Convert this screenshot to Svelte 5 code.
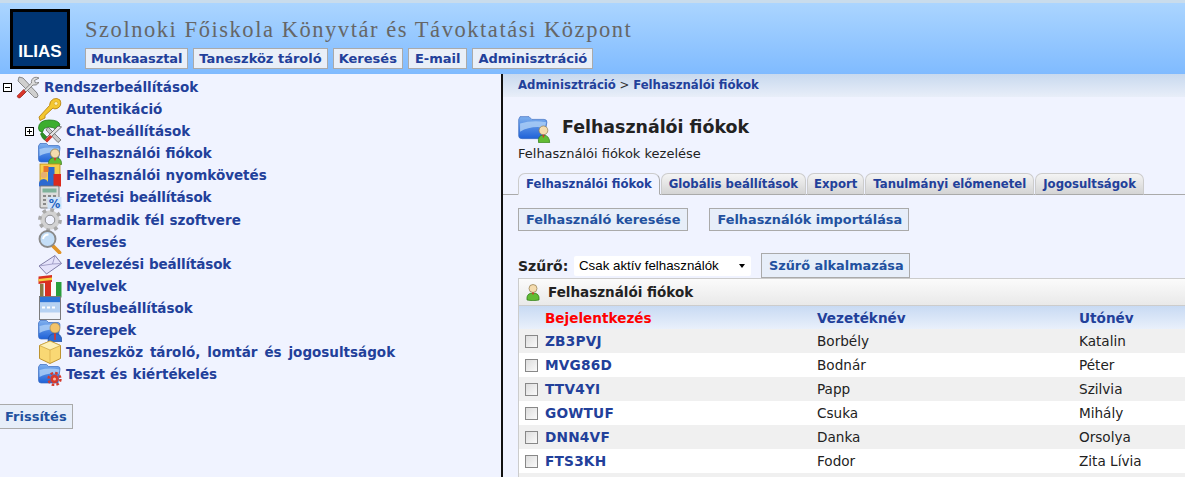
<script>
  const nav = ['Munkaasztal', 'Taneszköz tároló', 'Keresés', 'E-mail', 'Adminisztráció'];
  const tree = [
    { label: 'Autentikáció', icon: 'key' },
    { label: 'Chat-beállítások', icon: 'chat', plus: true },
    { label: 'Felhasználói fiókok', icon: 'users' },
    { label: 'Felhasználói nyomkövetés', icon: 'track' },
    { label: 'Fizetési beállítások', icon: 'calc', tight: true },
    { label: 'Harmadik fél szoftvere', icon: 'gear' },
    { label: 'Keresés', icon: 'search' },
    { label: 'Levelezési beállítások', icon: 'mail', tight: true },
    { label: 'Nyelvek', icon: 'flags' },
    { label: 'Stílusbeállítások', icon: 'style' },
    { label: 'Szerepek', icon: 'roles' },
    { label: 'Taneszköz tároló, lomtár és jogosultságok', icon: 'box', wide: true },
    { label: 'Teszt és kiértékelés', icon: 'test' }
  ];
  const tabs = ['Felhasználói fiókok', 'Globális beállítások', 'Export', 'Tanulmányi előmenetel', 'Jogosultságok'];
  const rows = [
    ['ZB3PVJ', 'Borbély', 'Katalin'],
    ['MVG86D', 'Bodnár', 'Péter'],
    ['TTV4YI', 'Papp', 'Szilvia'],
    ['GOWTUF', 'Csuka', 'Mihály'],
    ['DNN4VF', 'Danka', 'Orsolya'],
    ['FTS3KH', 'Fodor', 'Zita Lívia']
  ];
</script>

{#snippet folder()}
  <path d="M0.500 5 L2 2.500 H8.500 L10.500 4.500 H20 Q22 4.500 22 7 L20 21 H3 Q0.500 21 0.500 18 Z" fill="url(#fb)" stroke="#3a6cc0" stroke-width=".7"/>
  <path d="M1.500 8 Q11 5.500 21.500 7.500 L20.500 12 Q10 10 1.500 15 Z" fill="#a9cdf6" opacity=".85"/>
{/snippet}

{#snippet person(green)}
  <path d="M10.500 23.500 Q10 16.500 17 16.500 Q24 16.500 23.500 23.500 Q17 24.500 10.500 23.500 Z" fill={green ? '#62bc34' : '#2d6ad0'} stroke={green ? '#2f7a18' : '#1e4a9a'} stroke-width=".7"/>
  <circle cx="17" cy="12.500" r="4.500" fill="#f5dcae" stroke="#8f7a4c" stroke-width=".8"/>
  <path d="M16 17 h2 l-.4 2.500 h-1.200 Z" fill="#d9352a"/>
{/snippet}

{#snippet icon(name)}
  <svg class="ticon" viewBox="0 0 24 24" aria-hidden="true">
    {#if name === 'tools'}
      <path d="M3 2 L7 3 L21 18 Q23 21 21 22.500 Q18.500 23.500 16.500 20.500 L2 6 Z" fill="#cfcfcf" stroke="#707070" stroke-width=".8"/>
      <path d="M23 3 Q18 1 16 4.500 Q15 6.500 15.500 8 L4 19 L4 21 L6 21 L17 10 Q20.500 11 23 7.500 L19.500 8 L18.500 5.500 Z" fill="#dcdcdc" stroke="#707070" stroke-width=".8"/>
      <path d="M1 21 L7.500 14.500 L10 17 L4 23 Q1.500 23.500 1 21 Z" fill="#d8352a" stroke="#8a1c14" stroke-width=".5"/>
    {:else if name === 'key'}
      <path d="M22 3 Q24.500 9 19 11.500 Q16.500 12.500 15 11 L7 18.500 L7 21 L2 23.500 L1 20 L11.500 8.500 Q11.500 4 15.500 2 Q19 .5 22 3 Z" fill="#f4c72f" stroke="#b98410" stroke-width=".9"/>
      <circle cx="18" cy="6.500" r="1.800" fill="#fff3b8" stroke="#c9971f" stroke-width=".5"/>
    {:else if name === 'chat'}
      <path d="M.5 9 Q1 1 11 1 Q21 1 22 6 L18 10 Q12 6.500 6 9.500 L4.500 13 Q.5 13 .5 9 Z" fill="#3cae2f" stroke="#1f7a1a" stroke-width=".8"/>
      <path d="M4 13 L10 19 L8 22 Q4 20 2.500 15 Z" fill="#2f8f28" stroke="#1f7a1a" stroke-width=".6"/>
      <path d="M10 8 L23 21 L20 23.500 L8 11 Z" fill="#c9c9c9" stroke="#555" stroke-width=".7"/>
      <path d="M23.500 8 L12 19 L9 23 L7 21 L9 18 L20 7 Z" fill="#e2e2e2" stroke="#444" stroke-width=".7"/>
      <path d="M7 21 L12 16 L14.500 18 L9 23.500 Z" fill="#d8352a"/>
    {:else if name === 'users'}
      {@render folder()}{@render person(true)}
    {:else if name === 'track'}
      <rect x="2" y="1" width="20" height="20" fill="#f7cf4d" stroke="#b98a18" stroke-width=".8"/>
      <path d="M1 23.500 Q0 16 6 16 Q11 16.500 10.500 23.500 Z" fill="#2d6ad0"/>
      <circle cx="6" cy="12" r="3.200" fill="#e8b070"/>
      <rect x="10" y="4" width="6.500" height="19" fill="#2d6ad0"/>
      <rect x="15.500" y="11" width="7.500" height="12.500" fill="#db2b1e"/>
      <rect x="5.500" y="3" width="5" height="6" fill="#e9782a"/>
    {:else if name === 'calc'}
      <rect x="2" y="1" width="19" height="22" rx="1" fill="#dcdcdc" stroke="#707070" stroke-width=".9"/>
      <rect x="4.500" y="3.500" width="14" height="4" fill="#7fb29a"/>
      <path d="M5 10h3v2H5zM10 10h3v2h-3zM15 10h3v2h-3zM5 14h3v2H5zM5 18h3v2H5z" fill="#888"/>
      <rect x="9.500" y="12" width="14" height="12" fill="#cfe3f9"/>
      <text x="16.500" y="22.500" font-size="11.500" font-weight="700" fill="#1c60c0" text-anchor="middle" font-family="DejaVu Sans">%</text>
    {:else if name === 'gear'}
      <circle cx="12" cy="12" r="7.500" fill="none" stroke="#d2d2d2" stroke-width="4.500"/>
      <circle cx="12" cy="12" r="10.200" fill="none" stroke="#a8a8a8" stroke-width="3.400" stroke-dasharray="3.700 4.300"/>
      <circle cx="12" cy="12" r="4.800" fill="none" stroke="#808080" stroke-width=".9"/>
    {:else if name === 'search'}
      <path d="M14.500 15.500 L21.500 22.500" stroke="#e09428" stroke-width="3.800" stroke-linecap="round"/>
      <circle cx="9.500" cy="9" r="8" fill="#c4def7" stroke="#8a8a8a" stroke-width="1.900"/>
      <path d="M5 9 Q6 4.500 10.500 4.500" stroke="#fff" stroke-width="1.900" fill="none"/>
    {:else if name === 'mail'}
      <path d="M1 14 L17 3.500 L23.500 11.500 L8.500 22 Z" fill="#e4e2fa" stroke="#74719c" stroke-width=".9"/>
      <path d="M1 14 L14.500 12 L17 3.500 M14.500 12 L23.500 11.500" fill="none" stroke="#9491bd" stroke-width=".8"/>
    {:else if name === 'flags'}
      <path d="M.5 2.500 L14 1 V8 L.5 10 Z" fill="#d93022"/>
      <path d="M.5 5 L14 3.500 V6 L.5 7.500 Z" fill="#f4ce3e"/>
      <rect x="2" y="10" width="3.500" height="13" fill="#8a7a44"/>
      <path d="M7 8 H13 V23.500 H7 Z" fill="#d93022"/>
      <path d="M13 8 H18 V23.500 H13 Z" fill="#fafafa"/>
      <path d="M18 8 H23.500 V23.500 H18 Z" fill="#2a9e3c"/>
    {:else if name === 'style'}
      <rect x="1.500" y=".5" width="21" height="23" fill="#eef3fb" stroke="#707070" stroke-width=".9"/>
      <rect x="2" y="1" width="20" height="5.500" fill="#2e76d8"/>
      <rect x="2" y="6.500" width="20" height="10" fill="#b6d2f2"/>
      <path d="M4 10.500h3v2H4zM9 10.500h3v2H9zM14 10.500h3v2h-3z" fill="#fff"/>
    {:else if name === 'roles'}
      {@render folder()}
      <path d="M10 23.500 Q10 15.500 17 15.500 Q24 15.500 24 23.500 Z" fill="#2d6ad0" stroke="#1e4a9a" stroke-width=".7"/>
      <circle cx="17" cy="10" r="5" fill="#f2c36a" stroke="#a58a55" stroke-width=".7"/>
      <path d="M16 15.500 h2 l-.3 6.500 h-1.400 Z" fill="#d9352a"/>
    {:else if name === 'box'}
      <path d="M12 1 L22.500 5.500 V18.500 L12 23.500 L1.500 18.500 V5.500 Z" fill="#f9d874" stroke="#b88a20" stroke-width=".9"/>
      <path d="M1.500 5.500 L12 10 L22.500 5.500 L12 1 Z" fill="#fdf0b8" stroke="#c99f3a" stroke-width=".7"/>
      <path d="M12 10 V23.500" stroke="#d5aa45" stroke-width=".7"/>
    {:else if name === 'test'}
      {@render folder()}
      <circle cx="16.500" cy="17" r="4.200" fill="#d63a2c"/>
      <circle cx="16.500" cy="17" r="6" fill="none" stroke="#d63a2c" stroke-width="2.400" stroke-dasharray="2.600 2.100"/>
      <circle cx="16.500" cy="17" r="1.500" fill="#f5b8a8"/>
    {/if}
  </svg>
{/snippet}

<div class="page">
  <svg class="defs" width="0" height="0" aria-hidden="true">
    <defs>
      <linearGradient id="fb" x1="0" y1="0" x2="0" y2="1">
        <stop offset="0" stop-color="#7fb0ee"/>
        <stop offset="1" stop-color="#1f62d8"/>
      </linearGradient>
    </defs>
  </svg>
  <header class="top">
    <div class="logo"><span>ILIAS</span></div>
    <div class="brand">
      <div class="title">Szolnoki Főiskola Könyvtár és Távoktatási Központ</div>
      <nav class="nav">
        {#each nav as n}<a class="navbtn">{n}</a>{/each}
      </nav>
    </div>
  </header>

  <div class="main">
    <aside class="left">
      <div class="row root">
        <span class="toggle minus"></span>
        {@render icon('tools')}
        <a>Rendszerbeállítások</a>
      </div>
      {#each tree as t}
        <div class="row child" class:tight={t.tight} class:wide={t.wide}>
          {#if t.plus}<span class="toggle plus"></span>{/if}
          {@render icon(t.icon)}
          <a>{t.label}</a>
        </div>
      {/each}
      <button class="btn refresh">Frissítés</button>
    </aside>

    <section class="right">
      <div class="crumb"><a>Adminisztráció</a> <span class="gt">&gt;</span> <a>Felhasználói fiókok</a></div>

      <div class="head">
        <svg class="hicon" viewBox="0 0 24 20" aria-hidden="true">
          <path d="M.5 3 L1.500 1 H8 L10 3 H19 Q21 3 21 5 L19 17 H3 Q.5 17 .5 15 Z" fill="url(#fb)" stroke="#3a6cc0" stroke-width=".5"/>
          <path d="M1.500 6 Q10 3.500 20.500 5 L19.500 9 Q9 7.500 1.500 12 Z" fill="#a9cdf6" opacity=".85"/>
          <path d="M15 20 Q14 14.500 18.500 14.500 Q23 14.500 23 20 Z" fill="#62bc34" stroke="#2f7a18" stroke-width=".5"/>
          <circle cx="18.500" cy="11" r="3.200" fill="#f5dcae" stroke="#8f7a4c" stroke-width=".5"/>
          <path d="M17.800 14.200 h1.400 l-.3 2 h-.8 Z" fill="#d9352a"/>
        </svg>
        <h1>Felhasználói fiókok</h1>
      </div>
      <p class="desc">Felhasználói fiókok kezelése</p>

      <div class="tabs">
        {#each tabs as t, i}
          <a class="tab" class:active={i === 0}>{t}</a>
        {/each}
      </div>

      <div class="actions">
        <button class="btn">Felhasználó keresése</button>
        <button class="btn">Felhasználók importálása</button>
      </div>

      <div class="filter">
        <label for="flt">Szűrő:</label>
        <div class="select" id="flt"><span>Csak aktív felhasználók</span><i></i></div>
        <button class="btn apply">Szűrő alkalmazása</button>
      </div>

      <div class="panel">
        <div class="ptitle">
          <svg class="picon" viewBox="0 0 16 18" aria-hidden="true">
            <path d="M2 17 Q1 10 8 10 Q15 10 14 17 Q8 18.500 2 17 Z" fill="#62bc34" stroke="#2f7a18" stroke-width=".7"/>
            <circle cx="8" cy="5.500" r="4" fill="#f5dcae" stroke="#8f7a4c" stroke-width=".7"/>
            <path d="M7 9.500 h2 l-.4 2 h-1.200 Z" fill="#d9352a"/>
          </svg>
          <span>Felhasználói fiókok</span>
        </div>
        <div class="thead grid">
          <span></span>
          <a class="sorted">Bejelentkezés</a>
          <a>Vezetéknév</a>
          <a>Utónév</a>
        </div>
        {#each rows as r, i}
          <div class="trow grid" class:alt={i % 2 === 0}>
            <span class="cb"></span>
            <a class="login">{r[0]}</a>
            <span>{r[1]}</span>
            <span>{r[2]}</span>
          </div>
        {/each}
        <div class="trow alt"></div>
      </div>
    </section>
  </div>
</div>

<style>
  :global(body) {
    margin: 0;
    background: #f0f3ff;
  }
  .defs {
    position: absolute;
  }
  .page {
    width: 1185px;
    height: 477px;
    overflow: hidden;
    font-family: "DejaVu Sans", Verdana, sans-serif;
    font-size: 13px;
    color: #222;
  }
  a {
    color: #22409a;
    font-weight: 700;
  }
  .top {
    height: 70px;
    border-top: 3px solid #c9dcec;
    border-bottom: 1px solid #7fbaff;
    background: linear-gradient(#abd5ff, #80bbff);
    display: flex;
    box-sizing: content-box;
    padding-left: 10px;
  }
  .logo {
    width: 54px;
    height: 54px;
    margin-top: 6px;
    border: 3px solid #000;
    background: #003573;
    display: flex;
    align-items: flex-end;
    justify-content: center;
  }
  .logo span {
    font: 700 17px "Liberation Sans", Arial, sans-serif;
    color: #fff;
    line-height: 17px;
    margin-bottom: 6px;
  }
  .brand {
    margin-left: 15px;
  }
  .title {
    font-family: "Liberation Serif", serif;
    font-size: 22.500px;
    letter-spacing: 1.550px;
    color: #666;
    line-height: 26px;
    margin-top: 14px;
    white-space: nowrap;
  }
  .nav {
    display: flex;
    gap: 5px;
    margin-top: 5px;
  }
  .navbtn {
    height: 19px;
    line-height: 19px;
    padding: 0 5px;
    border: 1px solid #aaa;
    background: #e9eff8;
    font-size: 13px;
    white-space: nowrap;
  }
  .navbtn:first-child {
    letter-spacing: -.1px;
  }
  .navbtn:nth-child(4) {
    padding: 0 6px;
  }
  .main {
    display: flex;
    height: 403px;
  }
  .left {
    width: 501px;
    flex: none;
    padding-top: 2px;
    box-sizing: border-box;
    position: relative;
  }
  .row {
    height: 22.090px;
    display: flex;
    align-items: center;
    font-size: 13.500px;
    word-spacing: .5px;
    white-space: nowrap;
    position: relative;
  }
  .row.tight { letter-spacing: -.13px; }
  .row.wide { word-spacing: 2.200px; }
  .root { padding-left: 16px; }
  .child { padding-left: 38px; }
  .ticon {
    width: 24px;
    height: 24px;
    margin: -1px 4px -1px 0;
    flex: none;
  }
  .toggle {
    position: absolute;
    width: 7px;
    height: 7px;
    border: 1px solid #000;
    background: #fff;
    top: 7px;
  }
  .toggle.minus { left: 3px; }
  .toggle.plus { left: 25px; }
  .toggle::before {
    content: "";
    position: absolute;
    left: 1px;
    top: 3px;
    width: 5px;
    height: 1px;
    background: #000;
  }
  .toggle.plus::after {
    content: "";
    position: absolute;
    left: 3px;
    top: 1px;
    width: 1px;
    height: 5px;
    background: #000;
  }
  .btn {
    font: 700 12.850px "DejaVu Sans", Verdana, sans-serif;
    color: #22519f;
    background: #e7eef9;
    border: 1px solid #aaa;
    padding: 0 7px;
    height: 23px;
    white-space: nowrap;
  }
  .refresh {
    display: block;
    margin: 19px 0 0 -1px;
    height: 25px;
    padding: 0 5px;
    font-size: 13px;
  }
  .right {
    flex: 1;
    min-width: 0;
    border-left: 2px solid #111;
    overflow: hidden;
  }
  .crumb {
    height: 23px;
    line-height: 23px;
    padding-left: 15px;
    font-size: 11.700px;
    background: linear-gradient(#c8d9ee, #e8eef9);
    white-space: nowrap;
  }
  .gt { color: #333; }
  .head {
    display: flex;
    align-items: center;
    margin: 18px 0 0 15px;
    height: 28px;
  }
  .hicon {
    width: 33px;
    height: 28px;
    flex: none;
  }
  h1 {
    margin: 0 0 0 11px;
    font-size: 17.400px;
    line-height: 24px;
    font-weight: 700;
    color: #222;
    position: relative;
    top: -2px;
  }
  .desc {
    margin: 3px 0 0 15px;
    font-size: 13px;
    line-height: 16px;
    color: #222;
  }
  .tabs {
    display: flex;
    gap: 1px;
    margin-top: 11px;
    padding-left: 15px;
    height: 21px;
    border-bottom: 1px solid #aaa;
  }
  .tab {
    line-height: 21px;
    padding: 0 7px;
    font-size: 11.700px;
    border: 1px solid #ccc;
    border-bottom: 1px solid #aaa;
    border-radius: 7px 7px 0 0;
    background: linear-gradient(#f4f4f4, #d4d4d4);
    white-space: nowrap;
    height: 20px;
  }
  .tab:nth-child(3) {
    padding: 0 6px;
  }
  .tab.active {
    background: #f0f3ff;
    border-bottom-color: #f0f3ff;
    border-right-color: #aaa;
  }
  .actions {
    display: flex;
    gap: 21px;
    margin: 13px 0 0 15px;
  }
  .actions .btn:last-child {
    padding-right: 6px;
  }
  .filter {
    display: flex;
    align-items: center;
    margin: 22px 0 0 15px;
    height: 25px;
  }
  .filter label {
    font-weight: 700;
    font-size: 14px;
    color: #222;
    width: 56px;
    flex: none;
  }
  .select {
    width: 177px;
    height: 20px;
    box-sizing: border-box;
    background: #fff;
    border-radius: 2px;
    font: 13.300px "Liberation Sans", Arial, sans-serif;
    display: flex;
    align-items: center;
    justify-content: space-between;
    padding: 0 5px;
    color: #000;
    flex: none;
  }
  .select i {
    width: 0;
    height: 0;
    border-left: 3.500px solid transparent;
    border-right: 3.500px solid transparent;
    border-top: 4px solid #000;
    margin-right: 1px;
  }
  .apply {
    margin-left: 10px;
    height: 25px;
    padding: 0 5px 0 7px;
  }
  .panel {
    margin-left: 15px;
    width: 800px;
    border-left: 1px solid #ccc;
  }
  .ptitle {
    height: 26px;
    border-top: 1px solid #ccc;
    border-bottom: 1px solid #ccc;
    background: linear-gradient(#fbfbfb, #e9e9e9);
    display: flex;
    align-items: center;
    padding-left: 6px;
    font-weight: 700;
    font-size: 13.500px;
    color: #222;
  }
  .picon {
    width: 16px;
    height: 18px;
    margin-right: 7px;
  }
  .grid {
    display: grid;
    grid-template-columns: 26px 272px 262px 1fr;
    align-items: center;
  }
  .thead {
    height: 23px;
    background: linear-gradient(#c8daf3, #e9f0fb);
    font-size: 13.600px;
    padding-top: 1px;
    box-sizing: border-box;
  }
  .sorted { color: #f00; }
  .trow {
    height: 24px;
    background: #fff;
    font-size: 13.700px;
    color: #222;
  }
  .trow.alt { background: #f0f0f0; }
  .trow span { font-size: 13.600px; }
  .login { letter-spacing: .2px; }
  .cb {
    width: 11px;
    height: 11px;
    margin-left: 6px;
    border: 1px solid #888;
    background: linear-gradient(135deg, #ddd, #fafafa);
  }
</style>
